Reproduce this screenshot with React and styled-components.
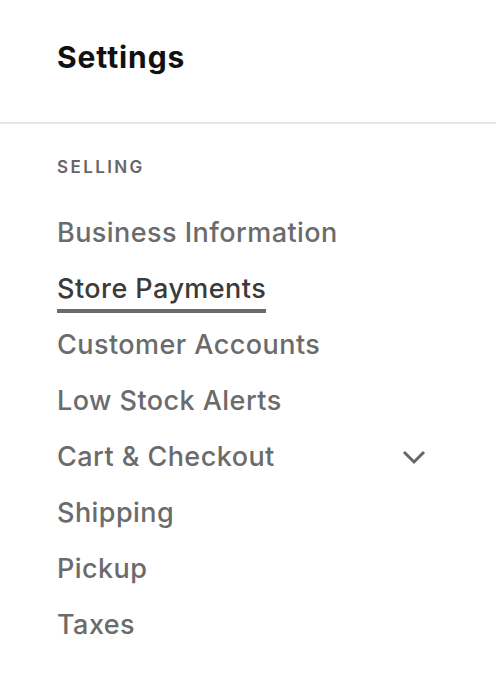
import React from 'react'
import styled, {createGlobalStyle} from 'styled-components'

const Global = createGlobalStyle`
  body {
    margin: 0;
    background: #ffffff;
    font-family: Inter, "Noto Sans", sans-serif;
  }
`;

const Panel = styled.div`
  width: 496px;
  height: 690px;
  background: #ffffff;
`;

const Header = styled.div`
  height: 124px;
  border-bottom: 2px solid #e6e6e6;
  box-sizing: border-box;
  padding: 38px 0 0 57px;
`;

const Title = styled.h1`
  margin: 0;
  font-size: 30px;
  line-height: 38px;
  font-weight: 700;
  color: #111111;
  letter-spacing: 0.9px;
`;

const Section = styled.div`
  padding: 33px 70px 0 57px;
`;

const SectionLabel = styled.div`
  font-size: 17px;
  font-weight: 600;
  letter-spacing: 2.4px;
  color: #666666;
  margin-bottom: 38px;
`;

const NavList = styled.ul`
  list-style: none;
  margin: 0;
  padding: 0;
  display: flex;
  flex-direction: column;
`;

const NavItem = styled.li`
  height: 56px;
  display: flex;
  align-items: flex-start;
  justify-content: space-between;
`;

const NavText = styled.span`
  font-size: 27px;
  font-weight: 500;
  line-height: 35px;
  color: ${p => (p.$active ? '#3a3a3a' : '#6b6b6b')};
  letter-spacing: 0.45px;
  border-bottom: ${p => (p.$active ? '4px solid #6b6b6b' : '4px solid transparent')};
  padding-bottom: 3px;
`;

const Chevron = () => (
  <svg width="24" height="16" viewBox="0 0 24 16" style={{marginTop: 10}}>
    <path d="M2 3 L12 13 L22 3" fill="none" stroke="#666" strokeWidth="3" />
  </svg>
);

const items = [
  {label: 'Business Information'},
  {label: 'Store Payments', active: true},
  {label: 'Customer Accounts'},
  {label: 'Low Stock Alerts'},
  {label: 'Cart & Checkout', expandable: true},
  {label: 'Shipping'},
  {label: 'Pickup'},
  {label: 'Taxes'},
];

export default function App() {
  return (
    <Panel>
      <Global />
      <Header>
        <Title>Settings</Title>
      </Header>
      <Section>
        <SectionLabel>SELLING</SectionLabel>
        <NavList>
          {items.map(it => (
            <NavItem key={it.label}>
              <NavText $active={it.active}>{it.label}</NavText>
              {it.expandable && <Chevron />}
            </NavItem>
          ))}
        </NavList>
      </Section>
    </Panel>
  );
}
